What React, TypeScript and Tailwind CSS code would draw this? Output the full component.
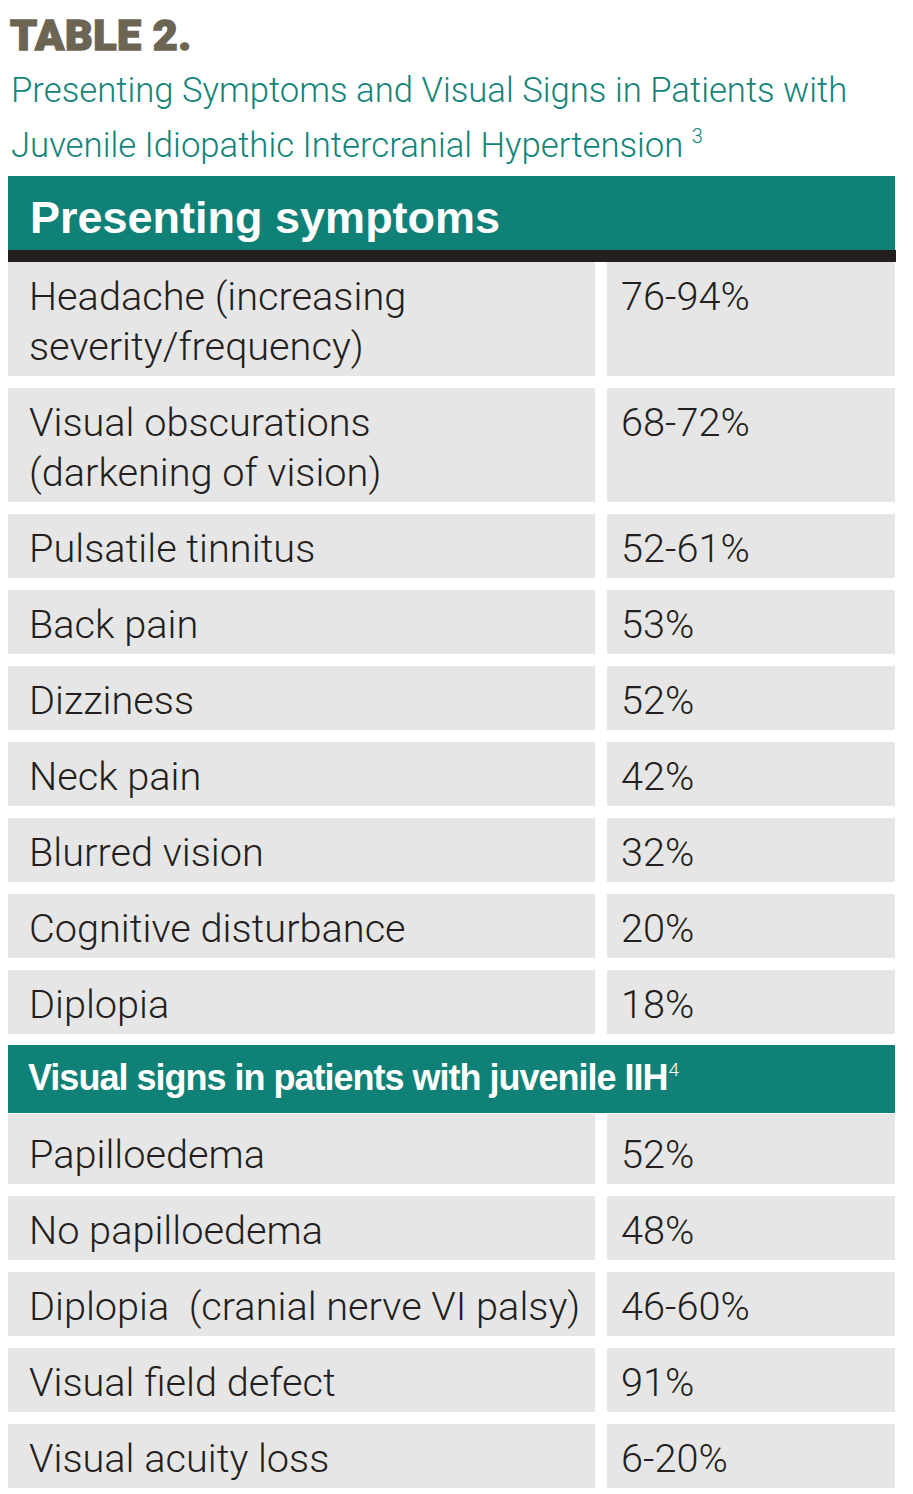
const symptoms: [string[], string][] = [
  [['Headache (increasing', 'severity/frequency)'], '76-94%'],
  [['Visual obscurations', '(darkening of vision)'], '68-72%'],
  [['Pulsatile tinnitus'], '52-61%'],
  [['Back pain'], '53%'],
  [['Dizziness'], '52%'],
  [['Neck pain'], '42%'],
  [['Blurred vision'], '32%'],
  [['Cognitive disturbance'], '20%'],
  [['Diplopia'], '18%'],
];

const signs: [string, string][] = [
  ['No papilloedema', '48%'],
  ['Diplopia  (cranial nerve VI palsy)', '46-60%'],
  ['Visual field defect', '91%'],
  ['Visual acuity loss', '6-20%'],
];

const bodyFont = "font-['Roboto','Liberation_Sans',sans-serif] font-light text-[39.7px] leading-[50px] text-[#231f20] whitespace-pre";

function Row({ lines, value, first }: { lines: string[]; value: string; first?: boolean }) {
  const pad = first ? 'pt-[16px] pb-[4px]' : 'pt-[10px] pb-[4px]';
  return (
    <div className="flex gap-3">
      <div className={`w-[587px] bg-[#e6e6e6] pl-[21px] ${pad} ${bodyFont}`}>
        {lines.map((l, i) => (
          <div key={i}>{l}</div>
        ))}
      </div>
      <div className={`flex-1 bg-[#e6e6e6] pl-[14px] ${pad} ${bodyFont}`}>{value}</div>
    </div>
  );
}

export default function App() {
  return (
    <div className="w-[913px] h-[1494px] bg-white pl-2 pt-[14px] font-['Liberation_Sans',sans-serif]">
      <h1 className="pl-[2px] h-[42px] font-['Roboto','Liberation_Sans',sans-serif] text-[43px] leading-[42px] font-black tracking-[0.5px] text-[#6d6554] [-webkit-text-stroke:1.5px_#6d6554]">
        TABLE 2.
      </h1>
      <p className="mt-[7px] pl-[3px] font-['Roboto','Liberation_Sans',sans-serif] font-light text-[34.7px] leading-[55px] text-[#128479]">
        Presenting Symptoms and Visual Signs in Patients with
        <br />
        Juvenile Idiopathic Intercranial Hypertension <sup className="text-[20px] -top-[14px]">3</sup>
      </p>

      <div className="mt-[3px] w-[887px]">
        <div className="h-[74px] bg-[#0f8176] pl-[22px] pt-[20px]">
          <div className="text-[45px] leading-[44px] font-bold text-white">Presenting symptoms</div>
        </div>
        <div className="h-3 bg-[#231f20] w-[888px]" />

        <div className="flex flex-col gap-3">
          {symptoms.map(([lines, v], i) => (
            <Row key={i} lines={lines} value={v} />
          ))}

          <div className="-mt-[1px]">
            <div className="h-[68px] bg-[#0f8176] pl-5 pt-[15px]">
              <div className="text-[36px] leading-[36px] font-bold tracking-[-1px] text-white">
                Visual signs in patients with juvenile IIH
                <sup className="font-['Roboto','Liberation_Sans',sans-serif] font-light text-[19px] tracking-normal -top-[14px] ml-[1px]">4</sup>
              </div>
            </div>
            <div className="mt-[1px]">
              <Row lines={['Papilloedema']} value="52%" first />
            </div>
          </div>

          {signs.map(([l, v], i) => (
            <Row key={i} lines={[l]} value={v} />
          ))}
        </div>
      </div>
    </div>
  );
}
